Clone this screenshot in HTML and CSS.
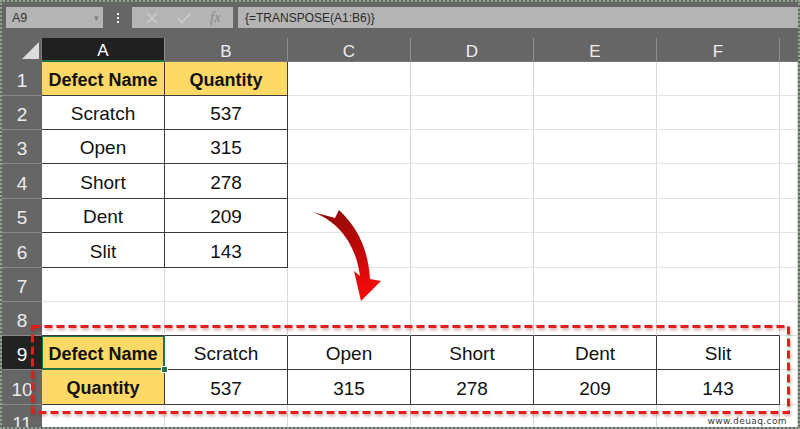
FILE: index.html
```html
<!DOCTYPE html>
<html>
<head>
<meta charset="utf-8">
<link rel="stylesheet" href="styles.css">
</head>
<body>
<div class="app">
  <div class="toolbar">
    <div class="namebox"><span>A9</span><span class="caret">&#9662;</span></div>
    <div class="grip"><i></i><i></i><i></i></div>
    <div class="actions">
      <svg class="ico" width="16" height="16" viewBox="0 0 16 16"><path d="M3 3L13 13M13 3L3 13" stroke="#cbcbcb" stroke-width="1.6" fill="none"/></svg>
      <svg class="ico" width="16" height="16" viewBox="0 0 16 16"><path d="M2 8.5L6 12.5L14 3.5" stroke="#cbcbcb" stroke-width="1.8" fill="none"/></svg>
      <span class="fx">fx</span>
    </div>
    <div class="formula">{=TRANSPOSE(A1:B6)}</div>
  </div>

  <div class="sheet">
    <div class="corner"><svg width="40" height="24" viewBox="0 0 40 24"><path d="M20 21H37V4Z" fill="#dcdcdc"/></svg></div>
    <div class="ch sel-col">A</div><div class="ch">B</div><div class="ch">C</div><div class="ch">D</div><div class="ch">E</div><div class="ch">F</div><div class="ch last"></div>

    <div class="rh">1</div><div class="t y">Defect Name</div><div class="t y">Quantity</div><div class="c"></div><div class="c"></div><div class="c"></div><div class="c"></div><div class="c"></div>
    <div class="rh">2</div><div class="t">Scratch</div><div class="t">537</div><div class="c"></div><div class="c"></div><div class="c"></div><div class="c"></div><div class="c"></div>
    <div class="rh">3</div><div class="t">Open</div><div class="t">315</div><div class="c"></div><div class="c"></div><div class="c"></div><div class="c"></div><div class="c"></div>
    <div class="rh">4</div><div class="t">Short</div><div class="t">278</div><div class="c"></div><div class="c"></div><div class="c"></div><div class="c"></div><div class="c"></div>
    <div class="rh">5</div><div class="t">Dent</div><div class="t">209</div><div class="c"></div><div class="c"></div><div class="c"></div><div class="c"></div><div class="c"></div>
    <div class="rh">6</div><div class="t">Slit</div><div class="t">143</div><div class="c"></div><div class="c"></div><div class="c"></div><div class="c"></div><div class="c"></div>
    <div class="rh">7</div><div class="c"></div><div class="c"></div><div class="c"></div><div class="c"></div><div class="c"></div><div class="c"></div><div class="c"></div>
    <div class="rh">8</div><div class="c b8"></div><div class="c b8"></div><div class="c b8"></div><div class="c b8"></div><div class="c b8"></div><div class="c b8"></div><div class="c"></div>
    <div class="rh sel-row">9</div><div class="t y active">Defect Name<span class="handle"></span></div><div class="t">Scratch</div><div class="t">Open</div><div class="t">Short</div><div class="t">Dent</div><div class="t">Slit</div><div class="c"></div>
    <div class="rh">10</div><div class="t y">Quantity</div><div class="t">537</div><div class="t">315</div><div class="t">278</div><div class="t">209</div><div class="t">143</div><div class="c"></div>
    <div class="rh">11</div><div class="c"></div><div class="c"></div><div class="c"></div><div class="c"></div><div class="c"></div><div class="c"></div><div class="c"></div>
  </div>

  <svg class="overlay" width="800" height="429" viewBox="0 0 800 429">
    <defs>
      <linearGradient id="ag" x1="0" y1="0" x2="0.4" y2="1">
        <stop offset="0" stop-color="#8e0a0a"/>
        <stop offset="0.55" stop-color="#b80808"/>
        <stop offset="1" stop-color="#f00a0a"/>
      </linearGradient>
    </defs>
    <g class="shadow">
      <rect x="32.5" y="326.5" width="756" height="86" fill="none" stroke="#e41e1e" stroke-width="3" stroke-dasharray="8 4"/>
    </g>
    <path d="M313 212 C 336 221 355 240 360 276 L 354 271 L 361 301 L 381 281 L 370 279 C 368 248 357 227 339 210 L 335 218 Z" fill="url(#ag)"/>
  </svg>
  <div class="watermark">www.deuaq.com</div>
</div>
</body>
</html>
```

FILE: styles.css
```css
html, body {
  margin: 0;
  padding: 0;
  background: #ffffff;
}

.app {
  position: relative;
  width: 800px;
  height: 429px;
  box-sizing: border-box;
  border: 2px dotted #8fa88f;
  background: #666666;
  overflow: hidden;
  font-family: "Liberation Sans", Arial, sans-serif;
}

.toolbar {
  display: flex;
  align-items: flex-start;
  height: 36px;
  box-sizing: border-box;
  padding: 5px 0 0 4px;
}

.namebox {
  width: 97px;
  height: 21px;
  box-sizing: border-box;
  background: #b4b4b4;
  display: flex;
  align-items: center;
  justify-content: space-between;
  padding: 0 4px 0 6px;
  font-size: 12.5px;
  color: #333333;
}

.caret {
  font-size: 9px;
  color: #7c7c7c;
}

.grip {
  width: 29px;
  height: 21px;
  display: flex;
  flex-direction: column;
  align-items: center;
  justify-content: center;
  gap: 2px;
}

.grip i {
  display: block;
  width: 2px;
  height: 2px;
  background: #f2f2f2;
}

.actions {
  width: 101px;
  height: 21px;
  background: #b4b4b4;
  display: flex;
  align-items: center;
  padding-left: 12px;
  box-sizing: border-box;
  gap: 16px;
}

.fx {
  font-family: "Liberation Serif", "Times New Roman", serif;
  font-style: italic;
  font-size: 15px;
  color: #8a8a8a;
  margin-left: 2px;
}

.formula {
  flex: 1;
  margin-left: 5px;
  height: 21px;
  background: #b4b4b4;
  font-size: 12px;
  color: #2b2b2b;
  display: flex;
  align-items: center;
  padding-left: 7px;
}

.sheet {
  display: grid;
  grid-template-columns: 40px repeat(6, 123px) 1fr;
  grid-template-rows: 24px 34px 34px 34px 35px 34px 35px 34px 34px 34px 35px 34px;
}

.corner {
  background: #666666;
  border-right: 1px solid #7a7a7a;
  box-sizing: border-box;
}

.corner svg {
  display: block;
}

.ch {
  background: #666666;
  color: #eeeeee;
  font-size: 17px;
  display: flex;
  align-items: center;
  justify-content: center;
  box-sizing: border-box;
  border-right: 1px solid #8e8e8e;
  border-bottom: 1px solid #777777;
  padding-top: 4px;
}

.ch.last {
  border-right: none;
}

.ch.sel-col {
  background: #202020;
  color: #ffffff;
  border-bottom: 2px solid #217346;
}

.rh {
  background: #666666;
  color: #ececec;
  font-size: 19px;
  display: flex;
  align-items: flex-end;
  justify-content: center;
  padding-bottom: 3px;
  box-sizing: border-box;
  border-bottom: 1px solid #888888;
}

.rh.sel-row {
  background: #222222;
  color: #ffffff;
}

.c, .t {
  background: #ffffff;
  box-sizing: border-box;
  display: flex;
  align-items: center;
  justify-content: center;
  font-size: 19px;
  color: #111111;
  padding-top: 3px;
}

.c {
  border-right: 1px solid #d9d9d9;
  border-bottom: 1px solid #e2e2e2;
}

.c.b8 {
  border-bottom: 1px solid #3a3a3a;
}

.t {
  border-right: 1px solid #3a3a3a;
  border-bottom: 1px solid #3a3a3a;
}

.y {
  background: #ffd966;
  font-weight: bold;
  font-size: 18px;
}

.active {
  position: relative;
  box-shadow: inset 0 0 0 1px #217346;
  border-color: #217346;
}

.handle {
  position: absolute;
  right: -4px;
  bottom: -4px;
  width: 5px;
  height: 5px;
  background: #217346;
  border: 1px solid #ffffff;
  z-index: 2;
}

.overlay {
  position: absolute;
  left: -2px;
  top: -2px;
  pointer-events: none;
}

.shadow {
  filter: drop-shadow(1px 2px 1.5px rgba(120, 0, 0, 0.35));
}

.watermark {
  position: absolute;
  right: 11px;
  bottom: 1px;
  font-size: 9px;
  letter-spacing: 0.4px;
  color: #3a3a3a;
  font-family: "DejaVu Sans", sans-serif;
}
```
